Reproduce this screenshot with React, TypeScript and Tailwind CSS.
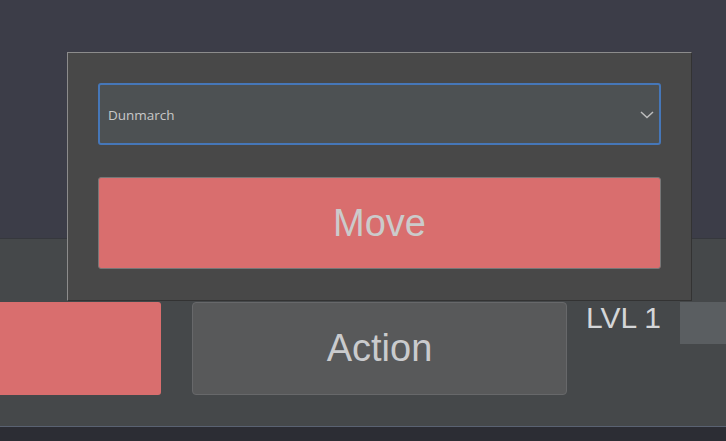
import React from "react";

export default function App() {
  return (
    <div
      className="relative w-[726px] h-[441px] overflow-hidden bg-[#3c3d48]"
      style={{ fontFamily: '"Liberation Sans", Arial, sans-serif' }}
    >
      <div className="h-[238px]" />
      <div className="h-[188px] bg-[#45484a] border-t border-[#36383d] flex items-start pt-[63px]">
        <div className="w-[161px] h-[93px] bg-[#d96e6e] rounded-r-[3px]" />
        <div className="ml-[31px] w-[375px] h-[93px] bg-[#58595a] border border-[#67686a] rounded-[4px] flex items-center justify-center text-[38px] text-[#cacbcd]">
          Action
        </div>
        <div className="ml-[19px] -mt-[4px] text-[30px] leading-[40px] text-[#d4d6d8]">LVL 1</div>
        <div className="ml-[19px] w-[46px] h-[42px] bg-[#5a5e61]" />
      </div>
      <div className="h-[15px] bg-[#2c2d34] border-t border-[#5a6272]" />

      <div className="absolute left-[67px] top-[52px] w-[625px] h-[249px] bg-[#484848] border-t border-l border-[#8c8c8c] border-r border-b border-r-[#333] border-b-[#333] p-[30px] flex flex-col">
        <div className="h-[62px] w-full bg-[#4d5153] border-2 border-[#4677b8] rounded-[3px] flex items-center justify-between pl-[8px] pr-[5px] pt-[2px]">
          <span
            className="text-[13.5px] text-[#c8c8c8]"
            style={{ fontFamily: '"Open Sans", sans-serif' }}
          >
            Dunmarch
          </span>
          <svg width="14" height="8" viewBox="0 0 14 8">
            <path d="M1 1 L7 6.5 L13 1" stroke="#bdbdbd" strokeWidth="1.5" fill="none" />
          </svg>
        </div>
        <div className="mt-[32px] h-[92px] w-full bg-[#d96e6e] border border-[#777] rounded-[3px] flex items-center justify-center text-[38px] text-[#cbcbcb]">
          Move
        </div>
      </div>
    </div>
  );
}
